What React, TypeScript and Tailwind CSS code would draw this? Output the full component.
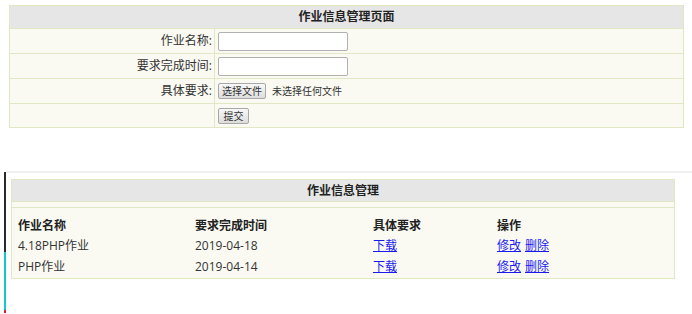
import React from "react";

const Row = ({ label, children, last }: { label: string; children: React.ReactNode; last?: boolean }) => (
  <div className={`flex ${last ? "h-[23px]" : "h-[25px] border-b border-[#e0e7c4]"}`}>
    <div className="w-[205px] shrink-0 border-r border-[#e0e7c4] flex items-center justify-end pr-[2px]">{label}</div>
    <div className="flex-1 flex items-center pl-[3px]">{children}</div>
  </div>
);

const Btn = ({ children, w }: { children: React.ReactNode; w: string }) => (
  <div
    className={`${w} h-[16px] border border-[#a8a8a8] rounded-[2px] bg-gradient-to-b from-[#f8f8f8] to-[#dddddd] flex items-center justify-center text-[10px] text-[#333] leading-none`}
  >
    {children}
  </div>
);

export default function App() {
  const rows = [
    ["4.18PHP作业", "2019-04-18", "h-[20px]"],
    ["PHP作业", "2019-04-14", "h-[21px]"],
  ];
  return (
    <div className="w-[692px] h-[314px] bg-white overflow-hidden text-[12px] text-[#333] font-['Open_Sans','Noto_Sans_CJK_SC',sans-serif] leading-none">
      <div className="pt-[5px] pl-[9px]">
        <div className="w-[675px] border border-[#e0e7c4] bg-[#fafaf2]">
          <div className="h-[23px] bg-[#e6e6e6] border-b border-[#e0e7c4] flex items-center justify-center font-bold text-[#222]">
            作业信息管理页面
          </div>
          <Row label="作业名称:">
            <div className="w-[130px] h-[19px] border border-[#b0b0b0] rounded-[2px] bg-white" />
          </Row>
          <Row label="要求完成时间:">
            <div className="w-[130px] h-[19px] border border-[#b0b0b0] rounded-[2px] bg-white" />
          </Row>
          <Row label="具体要求:">
            <Btn w="w-[48px]">选择文件</Btn>
            <span className="ml-[6px] text-[10px]">未选择任何文件</span>
          </Row>
          <Row label="" last>
            <Btn w="w-[31px]">提交</Btn>
          </Row>
        </div>
      </div>

      <div className="mt-[43px] flex h-[142px]">
        <div className="w-[4px] shrink-0" />
        <div className="w-[2px] shrink-0 flex flex-col pt-[1px]">
          <div className="h-[80px] bg-[#2a2a2a]" />
          <div className="flex-1 bg-[#10c8c8]" />
          <div className="h-[3px] bg-[#e02020]" />
        </div>
        <div className="flex-1 border-t-2 border-[#efefef] pt-[6px] pl-[5px]">
          <div className="w-[664px] border border-[#e0e7c4] bg-[#fafaf2]">
            <div className="h-[22px] bg-[#e6e6e6] border-b border-[#e0e7c4] flex items-center justify-center font-bold text-[#222]">
              作业信息管理
            </div>
            <div className="h-[6px] border-b border-[#e0e7c4]" />
            <div className="pl-[6px] pt-[8px] pb-[1px]">
              <div className="grid grid-cols-[177px_178px_124px_1fr] h-[20px] items-center font-bold text-[#222]">
                <div>作业名称</div>
                <div>要求完成时间</div>
                <div>具体要求</div>
                <div>操作</div>
              </div>
              {rows.map(([name, date, h]) => (
                <div key={name} className={`grid grid-cols-[177px_178px_124px_1fr] ${h} items-center`}>
                  <div>{name}</div>
                  <div>{date}</div>
                  <div>
                    <a href="#" className="text-[#1a1aee] underline">下载</a>
                  </div>
                  <div className="flex gap-[4px]">
                    <a href="#" className="text-[#1a1aee] underline">修改</a>
                    <a href="#" className="text-[#1a1aee] underline">删除</a>
                  </div>
                </div>
              ))}
            </div>
          </div>
        </div>
      </div>
    </div>
  );
}
